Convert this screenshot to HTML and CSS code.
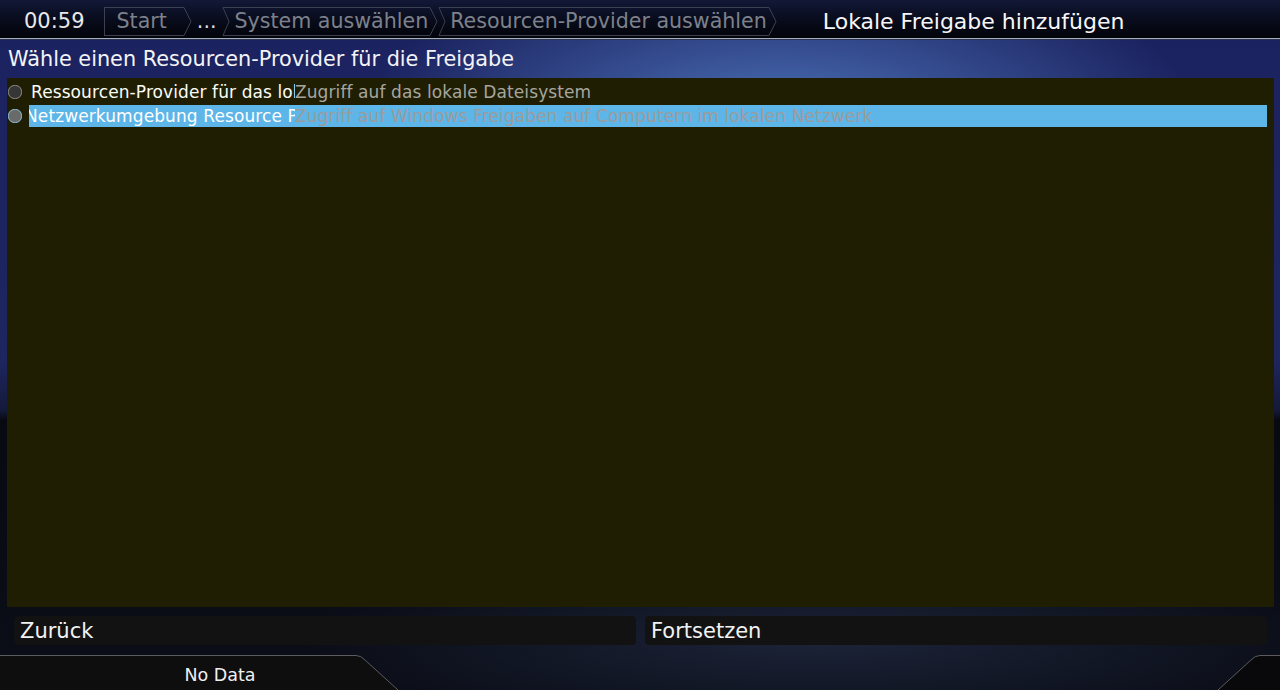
FILE: index.html
```html
<!DOCTYPE html>
<html lang="de">
<head>
  <meta charset="UTF-8" />
  <title>Lokale Freigabe hinzufügen</title>
  <link rel="stylesheet" href="styles.css">
</head>
<body>
  <header class="topbar">
    <span class="clock">00:59</span>
    <nav class="crumbs" aria-label="Navigation">
      <span class="crumb first">
        <span class="crumb-text">Start</span>
        <svg class="point" width="8" height="29" viewBox="0 0 8 29"><path d="M0 0.5 L7 14.5 L0 28.5" /></svg>
      </span>
      <span class="crumb plain"><span class="crumb-text">...</span></span>
      <span class="crumb">
        <svg class="notch" width="8" height="29" viewBox="0 0 8 29"><path d="M8 0.5 H1 L7 14.5 L1 28.5 H8" /></svg>
        <span class="crumb-text">System auswählen</span>
        <svg class="point" width="8" height="29" viewBox="0 0 8 29"><path d="M0 0.5 L7 14.5 L0 28.5" /></svg>
      </span>
      <span class="crumb">
        <svg class="notch" width="8" height="29" viewBox="0 0 8 29"><path d="M8 0.5 H1 L7 14.5 L1 28.5 H8" /></svg>
        <span class="crumb-text">Resourcen-Provider auswählen</span>
        <svg class="point" width="8" height="29" viewBox="0 0 8 29"><path d="M0 0.5 L7 14.5 L0 28.5" /></svg>
      </span>
    </nav>
    <h1 class="title">Lokale Freigabe hinzufügen</h1>
  </header>

  <main class="content">
    <h2 class="prompt">Wähle einen Resourcen-Provider für die Freigabe</h2>

    <div class="list" role="listbox">
      <div class="row" role="option">
        <span class="radio"></span>
        <span class="cell label">Ressourcen-Provider für das lokale Dateisystem</span>
        <span class="cell desc">Zugriff auf das lokale Dateisystem</span>
      </div>
      <div class="row selected" role="option" aria-selected="true">
        <span class="radio"></span>
        <span class="cell label">Netzwerkumgebung Resource Provider</span>
        <span class="cell desc">Zugriff auf Windows Freigaben auf Computern im lokalen Netzwerk</span>
      </div>
    </div>

    <div class="actions">
      <button class="action">Zurück</button>
      <button class="action">Fortsetzen</button>
    </div>
  </main>

  <footer class="footer">
    <div class="tab-left">
      <svg width="400" height="35" viewBox="0 0 400 35">
        <path class="tab-fill" d="M0 0.5 H356 Q361 0.5 365 5 L398 35 H0 Z" />
        <path class="tab-line" d="M0 0.5 H356 Q361 0.5 365 5 L398 35" />
      </svg>
      <span class="status">No Data</span>
    </div>
    <div class="footer-gap"></div>
    <svg class="tab-right" width="64" height="35" viewBox="0 0 64 35">
      <path class="tab-fill" d="M64 0.5 H44 Q39 0.5 35 5 L2 35 H64 Z" />
      <path class="tab-line" d="M64 0.5 H44 Q39 0.5 35 5 L2 35" />
    </svg>
  </footer>
</body>
</html>
```

FILE: styles.css
```css
/* Reset and base */
* {
  box-sizing: border-box;
  margin: 0;
  padding: 0;
}
html, body {
  height: 100%;
  overflow: hidden;
}
body {
  display: flex;
  flex-direction: column;
  font-family: 'DejaVu Sans', 'Liberation Sans', sans-serif;
  color: #f4f4f4;
  background:
    radial-gradient(ellipse 420px 160px at 780px 120px, rgba(84, 128, 200, 0.85), rgba(84, 128, 200, 0) 100%),
    radial-gradient(ellipse 520px 90px at 820px 640px, rgba(30, 38, 60, 0.9), rgba(30, 38, 60, 0) 100%),
    linear-gradient(to bottom, #1b2260 0, #1e2660 360px, #141a3a 410px, #080a12 420px, #0b0e18 100%);
}

/* Top bar */
.topbar {
  display: flex;
  align-items: center;
  height: 39px;
  margin-bottom: 1px;
  padding: 4px 0 0 24px;
  background: linear-gradient(to bottom, #121837 0, #070a18 60%, #03050b 100%);
  border-bottom: 1px solid #a6adbb;
  box-shadow: 0 1px 0 #2a3252;
  flex-shrink: 0;
}
.clock {
  font-size: 21px;
  color: #e8e8ea;
  margin-right: 19px;
}
.crumbs {
  display: flex;
  align-items: center;
}
.crumb {
  display: flex;
  align-items: stretch;
  height: 29px;
}
.crumb-text {
  display: flex;
  align-items: center;
  font-size: 20.6px;
  color: #7d818b;
  padding: 0 2px 0 4px;
  border-top: 1px solid #3b4052;
  border-bottom: 1px solid #3b4052;
  white-space: nowrap;
}
.crumb.first .crumb-text {
  border-left: 1px solid #3b4052;
  padding: 0 17px 0 12px;
}
.crumb.plain .crumb-text {
  border: none;
  color: #dcdde2;
  padding: 0 6px 0 5px;
}
.crumb svg path {
  fill: none;
  stroke: #3b4052;
  stroke-width: 1;
}
.title {
  font-weight: normal;
  font-size: 22px;
  color: #f6f6f8;
  margin-left: 46px;
  white-space: nowrap;
}

/* Main content */
.content {
  flex: 1;
  display: flex;
  flex-direction: column;
  padding: 0 6px 0 7px;
}
.prompt {
  font-weight: normal;
  font-size: 20.8px;
  line-height: 38px;
  padding-left: 1px;
  color: #f4f4f6;
}
.list {
  height: 529px;
  flex-shrink: 0;
  background: #1f1e03;
  padding-top: 3px;
}
.row {
  display: flex;
  align-items: center;
  height: 22px;
  margin-bottom: 2px;
  padding-right: 7px;
  font-size: 17px;
  letter-spacing: 0.1px;
}
.radio {
  width: 14px;
  height: 14px;
  margin: 0 7px 0 1px;
  border-radius: 45%;
  background: #363636;
  border: 1px solid #8a8a8a;
  flex-shrink: 0;
}
.cell {
  height: 22px;
  line-height: 22px;
  white-space: nowrap;
  overflow: hidden;
}
.label {
  width: 266px;
  flex-shrink: 0;
  color: #fbfbf6;
  padding-left: 2px;
}
.desc {
  flex: 1;
  color: #a6a69f;
}
.row.selected .cell {
  background: #5db5e8;
}
.row.selected .label {
  color: #ffffff;
  text-indent: -4px;
  padding-left: 0;
}
.row.selected .desc {
  color: #9c9c9c;
}
.row.selected .radio {
  background: #6a6a6a;
  border-color: #8fbfdc;
}

/* Buttons */
.actions {
  display: flex;
  gap: 9px;
  padding: 9px 7px 10px 7px;
}
.action {
  flex: 1;
  height: 29px;
  background: #121212;
  border: none;
  border-radius: 4px;
  color: #f2f2f2;
  font-family: inherit;
  font-size: 21px;
  text-align: left;
  padding-left: 6px;
}

/* Footer */
.footer {
  display: flex;
  height: 35px;
  flex-shrink: 0;
}
.tab-left {
  display: grid;
  width: 400px;
}
.tab-left svg,
.tab-left .status {
  grid-area: 1 / 1;
}
.status {
  width: 440px;
  text-align: center;
  line-height: 40px;
  font-size: 17.5px;
  color: #f0f0f0;
}
.tab-fill {
  fill: #0e0e0e;
}
.tab-line {
  fill: none;
  stroke: #5c5c5e;
  stroke-width: 1;
}
.footer-gap {
  flex: 1;
}
.tab-right .tab-fill {
  fill: #09090c;
}
```
